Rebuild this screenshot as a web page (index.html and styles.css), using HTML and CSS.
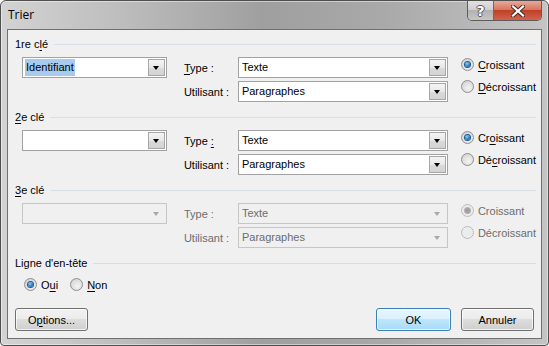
FILE: index.html
```html
<!DOCTYPE html>
<html lang="fr">
<head>
    <meta charset="UTF-8">
    <title>Trier</title>
    <link rel="stylesheet" href="styles.css">
</head>
<body>
    <div class="window">
        <div class="titlebar">
            <span class="title">Trier</span>
            <div class="caption-buttons">
                <div class="cap-btn help">?</div>
                <div class="cap-btn close">
                    <svg width="14" height="12" viewBox="0 0 14 12">
                        <path d="M2 1.5 L12 10.5 M12 1.5 L2 10.5" stroke="#4a2a24" stroke-width="4.2" stroke-linecap="square"/>
                        <path d="M2 1.5 L12 10.5 M12 1.5 L2 10.5" stroke="#fff" stroke-width="2.2" stroke-linecap="square"/>
                    </svg>
                </div>
            </div>
        </div>

        <div class="client">
            <!-- 1re clé -->
            <section class="key">
                <div class="group-header"><span>1re c<u>l</u>é</span><div class="rule"></div></div>
                <div class="key-row">
                    <div class="combo key-select"><span class="value"><span class="selected">Identifiant</span></span><span class="drop"></span></div>
                    <div class="fields">
                        <span class="field-label"><u>T</u>ype :</span>
                        <div class="combo"><span class="value">Texte</span><span class="drop"></span></div>
                        <span class="field-label">Utilisant :</span>
                        <div class="combo"><span class="value">Paragraphes</span><span class="drop"></span></div>
                    </div>
                    <div class="order">
                        <label class="radio checked"><span class="dot"></span><span><u>C</u>roissant</span></label>
                        <label class="radio"><span class="dot"></span><span><u>D</u>écroissant</span></label>
                    </div>
                </div>
            </section>

            <!-- 2e clé -->
            <section class="key">
                <div class="group-header"><span><u>2</u>e clé</span><div class="rule"></div></div>
                <div class="key-row">
                    <div class="combo key-select"><span class="value"></span><span class="drop"></span></div>
                    <div class="fields">
                        <span class="field-label">Type <u>:</u></span>
                        <div class="combo"><span class="value">Texte</span><span class="drop"></span></div>
                        <span class="field-label">Utilisant :</span>
                        <div class="combo"><span class="value">Paragraphes</span><span class="drop"></span></div>
                    </div>
                    <div class="order">
                        <label class="radio checked"><span class="dot"></span><span>Cr<u>o</u>issant</span></label>
                        <label class="radio"><span class="dot"></span><span>Dé<u>c</u>roissant</span></label>
                    </div>
                </div>
            </section>

            <!-- 3e clé (désactivée) -->
            <section class="key disabled">
                <div class="group-header"><span><u>3</u>e clé</span><div class="rule"></div></div>
                <div class="key-row">
                    <div class="combo key-select"><span class="value"></span><span class="drop"></span></div>
                    <div class="fields">
                        <span class="field-label">Type :</span>
                        <div class="combo"><span class="value">Texte</span><span class="drop"></span></div>
                        <span class="field-label">Utilisant :</span>
                        <div class="combo"><span class="value">Paragraphes</span><span class="drop"></span></div>
                    </div>
                    <div class="order">
                        <label class="radio checked"><span class="dot"></span><span>Croissant</span></label>
                        <label class="radio"><span class="dot"></span><span>Décroissant</span></label>
                    </div>
                </div>
            </section>

            <!-- Ligne d'en-tête -->
            <section class="header-row">
                <div class="group-header"><span>Ligne d'en-tête</span><div class="rule"></div></div>
                <div class="yes-no">
                    <label class="radio checked"><span class="dot"></span><span>O<u>u</u>i</span></label>
                    <label class="radio"><span class="dot"></span><span><u>N</u>on</span></label>
                </div>
            </section>

            <div class="actions">
                <button class="btn">O<u>p</u>tions...</button>
                <div class="spacer"></div>
                <button class="btn default">OK</button>
                <button class="btn">Annuler</button>
            </div>
        </div>
    </div>
</body>
</html>
```

FILE: styles.css
```css
:root {
    --client-bg: #f0f0f0;
    --combo-border: #a2a2a2;
    --rule: #d5dfe5;
    --disabled-text: #6d6d6d;
    --disabled-border: #c6c6c6;
}

* {
    margin: 0;
    padding: 0;
    box-sizing: border-box;
}

body {
    font-family: "Liberation Sans", Arial, sans-serif;
    font-size: 11px;
    color: #000;
    background: #fff;
}

u {
    text-decoration: underline;
    text-underline-offset: 2px;
}

.window {
    width: 549px;
    height: 346px;
    border: 1px solid #4f4f4f;
    border-radius: 6px 6px 4px 4px;
    background: linear-gradient(to right, #d3d3d3 0%, #bdbdbd 22%, #9f9f9f 48%, #a9a9a9 70%, #c4c4c4 100%);
    box-shadow: inset 0 0 0 1px rgba(255, 255, 255, 0.45);
    display: flex;
    flex-direction: column;
    overflow: hidden;
}

.titlebar {
    height: 28px;
    display: flex;
    justify-content: space-between;
    align-items: flex-start;
    padding-left: 7px;
}

.title {
    font-family: "Open Sans", "Liberation Sans", sans-serif;
    font-size: 12px;
    line-height: 28px;
    color: #000;
}

.caption-buttons {
    display: flex;
    margin-right: 6px;
    border: 1px solid #5d5d5d;
    border-top: none;
    border-radius: 0 0 5px 5px;
    overflow: hidden;
    height: 20px;
}

.cap-btn {
    height: 19px;
    display: flex;
    align-items: center;
    justify-content: center;
}

.help {
    width: 26px;
    border-right: 1px solid #6a6a6a;
    background: linear-gradient(to bottom, #e2e2e2 0%, #cfcfcf 45%, #b2b2b2 50%, #c6c6c6 100%);
    font-family: "DejaVu Sans", sans-serif;
    font-weight: bold;
    font-size: 14px;
    color: #fff;
    text-shadow: 1px 0 #555, -1px 0 #555, 0 1px #555, 0 -1px #555;
}

.close {
    width: 47px;
    background: linear-gradient(to bottom, #e9a99c 0%, #d8775f 45%, #c0402a 50%, #d2624a 100%);
}

.client {
    flex: 1;
    margin: 0 6px 6px 6px;
    border: 1px solid #707070;
    background: var(--client-bg);
    padding: 6px 5px 0 7px;
    display: flex;
    flex-direction: column;
}

.group-header {
    height: 16px;
    display: flex;
    align-items: center;
}

.rule {
    flex: 1;
    height: 1px;
    background: var(--rule);
    margin-left: 6px;
}

.key {
    margin-bottom: 7px;
}

.key-row {
    display: flex;
    margin-top: 5px;
    padding-left: 7px;
}

.combo {
    height: 21px;
    border: 1px solid var(--combo-border);
    background: #fff;
    display: flex;
    align-items: center;
}

.combo .value {
    flex: 1;
    padding-left: 3px;
    line-height: 17px;
}

.selected {
    display: inline-block;
    margin-left: -1px;
    padding: 0 1px;
    background: #a6cbef;
}

.combo .drop {
    width: 17px;
    height: 17px;
    margin-right: 1px;
    border: 1px solid #a7a7a7;
    background: linear-gradient(to bottom, #f4f4f4 0%, #e8e8e8 50%, #dadada 51%, #d3d3d3 100%);
    display: flex;
    align-items: center;
    justify-content: center;
}

.combo .drop::after {
    content: "";
    border-left: 3.5px solid transparent;
    border-right: 3.5px solid transparent;
    border-top: 4px solid #000;
    margin-top: 1px;
}

.key-select {
    width: 145px;
    margin-right: 17px;
}

.fields {
    display: grid;
    grid-template-columns: 54px 210px;
    row-gap: 3px;
    align-items: center;
}

.order {
    display: flex;
    flex-direction: column;
    gap: 9px;
    margin-left: 13px;
    padding-top: 1px;
}

.radio {
    display: flex;
    align-items: center;
    gap: 4px;
    height: 13px;
}

.radio .dot {
    width: 13px;
    height: 13px;
    border-radius: 50%;
    border: 1px solid #8e8f8f;
    background: radial-gradient(circle at 60% 65%, #f4f4f4 0%, #dcdcdc 60%, #c8c8c8 100%);
    display: flex;
    align-items: center;
    justify-content: center;
}

.radio.checked .dot::after {
    content: "";
    width: 5px;
    height: 5px;
    border-radius: 50%;
    background: radial-gradient(circle at 40% 35%, #8fd0f4 0%, #2a7fc1 55%, #0d4a86 100%);
    box-shadow: 0 0 0 1px #1b5a94;
}

.disabled .field-label,
.disabled .radio,
.disabled .combo .value {
    color: var(--disabled-text);
}

.disabled .combo {
    background: var(--client-bg);
    border-color: var(--disabled-border);
}

.disabled .combo .drop {
    border-color: transparent;
    background: transparent;
}

.disabled .combo .drop::after {
    border-top-color: #a8a8a8;
}

.disabled .radio .dot {
    border-color: #bcbcbc;
    background: #ececec;
}

.disabled .radio.checked .dot::after {
    background: #a0a0a0;
    box-shadow: 0 0 0 1px #b4b4b4;
}

.header-row .yes-no {
    display: flex;
    gap: 12px;
    margin-top: 7px;
    padding-left: 9px;
}

.actions {
    display: flex;
    gap: 10px;
    margin-top: 17px;
    padding-right: 2px;
}

.spacer {
    flex: 1;
}

.btn {
    width: 73px;
    height: 23px;
    font-family: inherit;
    font-size: 11px;
    color: #000;
    border: 1px solid #707070;
    border-radius: 3px;
    background: linear-gradient(to bottom, #f2f2f2 0%, #ebebeb 49%, #dddddd 50%, #cfcfcf 100%);
    box-shadow: inset 0 0 0 1px rgba(255, 255, 255, 0.7);
}

.btn.default {
    width: 75px;
    border-color: #3c7fb1;
    background: linear-gradient(to bottom, #eaf6fd 0%, #d9f0fc 49%, #bee6fd 50%, #a7d9f5 100%);
}
```
